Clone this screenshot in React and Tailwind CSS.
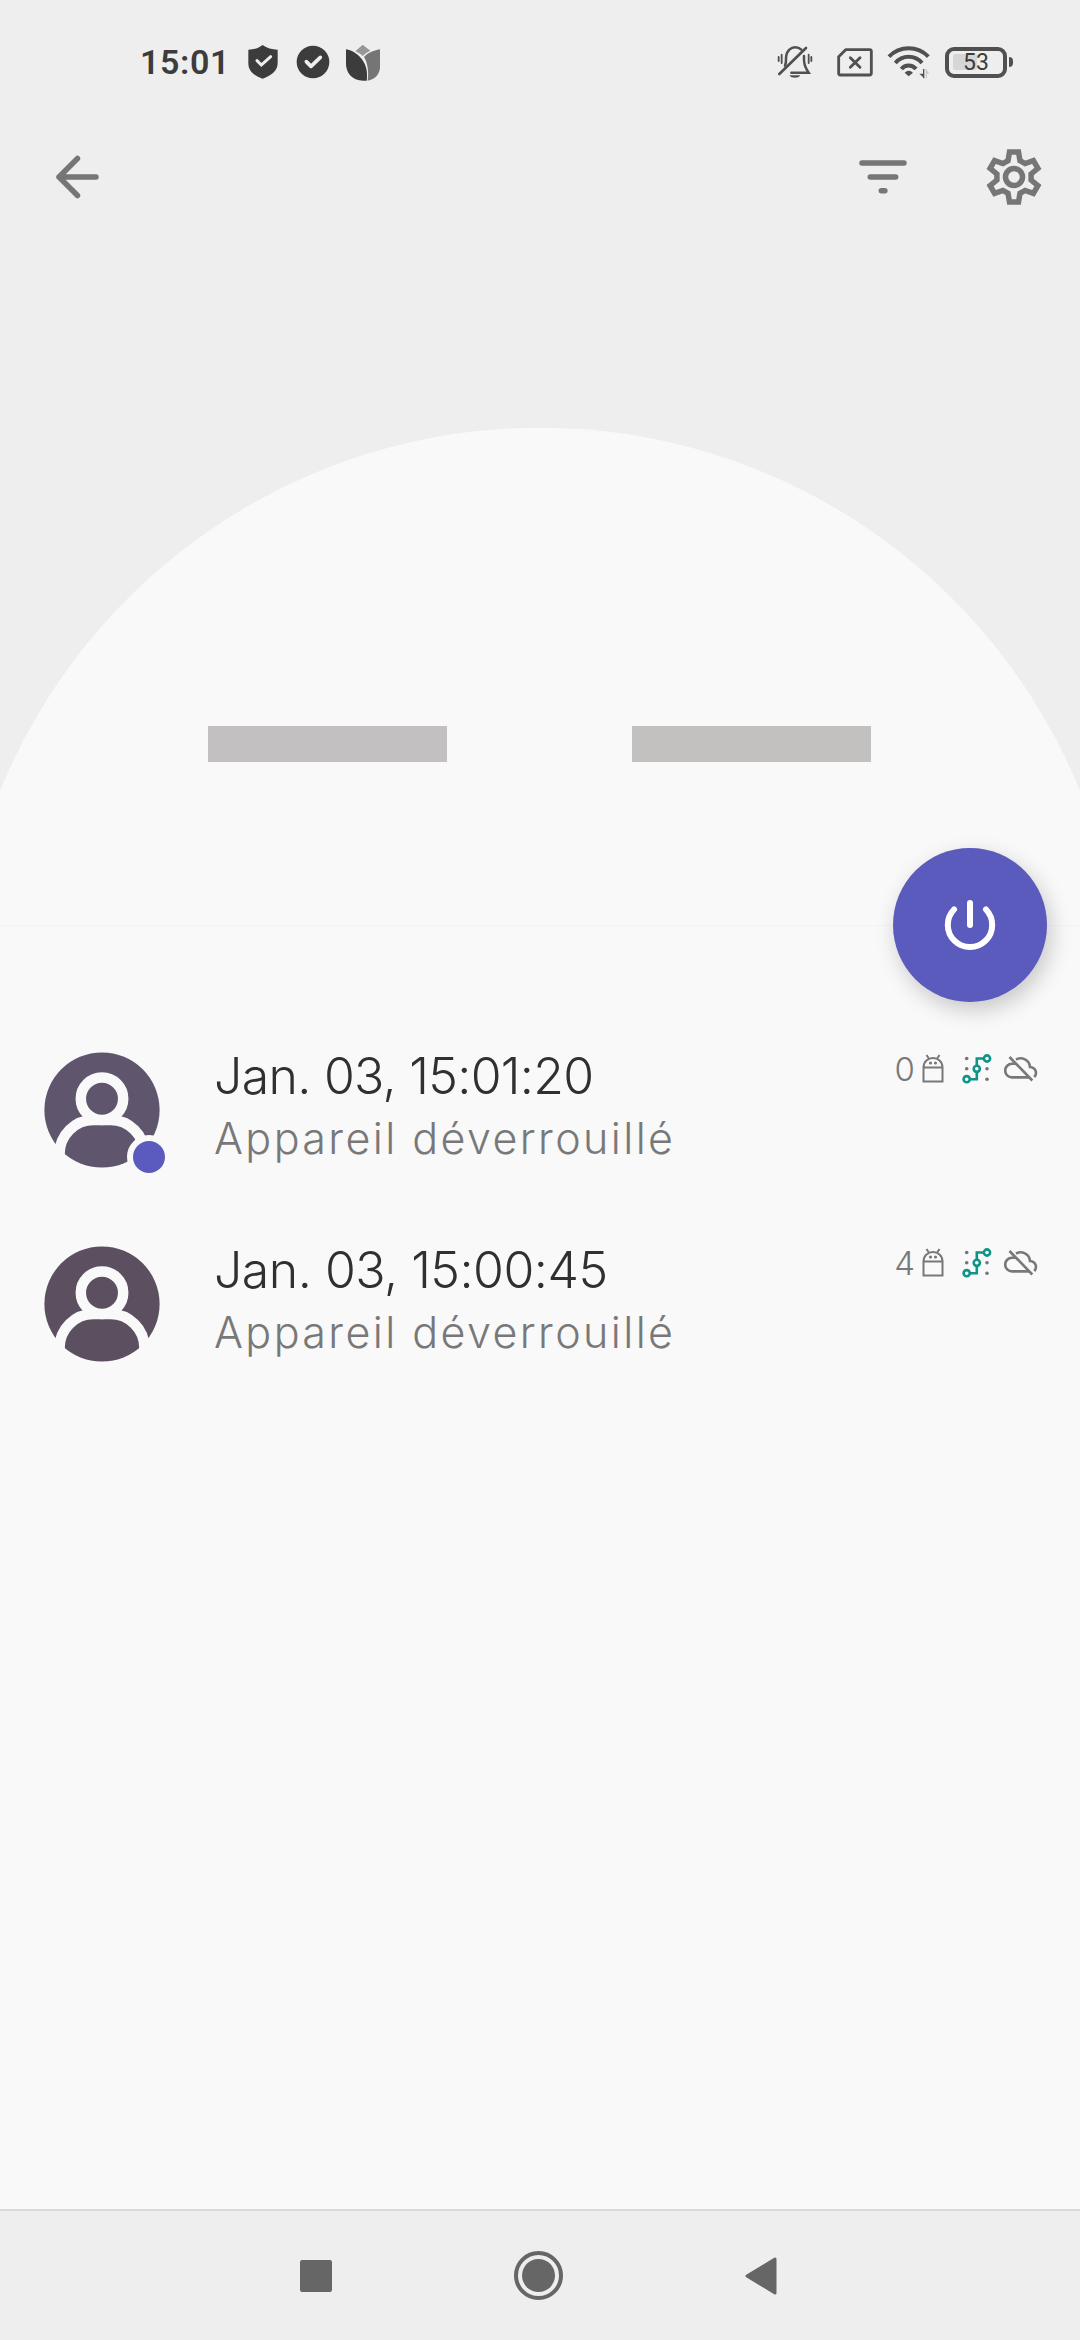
// Unlock history screen

const events = [
  { id: 1, date: 'Jan. 03, 15:01:20', label: 'Appareil déverrouillé', apps: 0, color: 'text-[#5f566e]', isNew: true, spacing: 'tracking-[-0.7px]' },
  { id: 2, date: 'Jan. 03, 15:00:45', label: 'Appareil déverrouillé', apps: 4, color: 'text-[#5b4f60]', isNew: false, spacing: 'tracking-[-0.5px]' }
];

const StatusBar = () => (
  <div className="flex h-[124px] items-center pl-[140px] pr-[67px] text-[#3c3c3c]">
    <span className="w-[106px] font-[Roboto] text-[34px] font-semibold leading-none tracking-[0.6px]">15:01</span>

    {/* Shield */}
    <svg className="h-9 w-[34px]" viewBox="0 0 102 108">
      <path fill="currentColor" d="M50 3C62 12 78 17 95 17V58C95 82 75 95 50 104C25 95 7 82 7 58V17C24 17 38 12 50 3Z" />
      <path d="M33 50L46 63L74 38" fill="none" stroke="#eee" strokeWidth="9" strokeLinecap="round" />
    </svg>

    {/* Check circle */}
    <svg className="ml-4 h-9 w-[34px]" viewBox="0 0 102 108">
      <circle cx="51" cy="54" r="49" fill="currentColor" />
      <path d="M31 53L45 67L73 40" fill="none" stroke="#eee" strokeWidth="11" strokeLinecap="round" strokeLinejoin="round" />
    </svg>

    {/* Tulip */}
    <svg className="ml-[15px] h-[37px] w-9" viewBox="0 0 108 111">
      <path fill="#969696" d="M53 2L76 20C66 25 58 30 53 36C47 30 40 26 31 22Z" />
      <path fill="#757575" d="M105 16C85 19 65 29 57 39C68 55 72 85 68 110C90 108 105 88 105 70Z" />
      <path fill="currentColor" d="M3 16C25 18 66 45 66 92C66 100 66 106 65 110H55C20 110 3 85 3 60Z" />
    </svg>

    <div className="ml-auto flex items-center text-[#505050]">
      {/* Muted bell */}
      <svg className="h-9 w-9" viewBox="0 0 108 108" fill="none" stroke="currentColor" strokeWidth="7.5" strokeLinecap="round">
        <path d="M7 90L87 12" strokeWidth="8" />
        <path d="M24 65C28 56 27 50 27 42C28 18 44 10 54 10C62 10 69 13 73 17" />
        <path d="M81 36C80 58 83 69 95 86H43" />
        <path d="M37 94H70C66 104 42 104 37 94Z" fill="currentColor" stroke="none" />
        <path d="M5 39V51M14 32V57M95 32V57M103 39V51" strokeWidth="5.5" />
      </svg>

      {/* No SIM */}
      <svg className="ml-[23px] h-[30px] w-[38px]" viewBox="0 0 114 90" fill="none" stroke="currentColor" strokeWidth="8.5">
        <path d="M29 8H101Q106 8 106 13V79Q106 84 101 84H13Q8 84 8 79V29Z" strokeLinejoin="round" />
        <path d="M43 32L72 61M72 32L43 61" strokeLinecap="round" />
      </svg>

      {/* Wi-Fi */}
      <svg className="ml-[13px] h-9 w-[43px]" viewBox="0 0 129 108" fill="none" stroke="currentColor" strokeWidth="12">
        <path d="M6 38A82 82 0 0 1 124 38M25 57A52 52 0 0 1 105 57M43 75A28 28 0 0 1 87 75" />
        <path d="M53 86Q65 74 78 86L65 97Z" fill="currentColor" stroke="none" />
        <path d="M110 75V103" strokeWidth="4" />
        <path d="M97 89H110V101Z" fill="currentColor" stroke="none" />
        <path d="M118 103V75" strokeWidth="4" stroke="#c9c9c9" />
        <path d="M127 89H118V77Z" fill="#c9c9c9" stroke="none" />
      </svg>

      <div className="relative ml-[15px] flex h-[31px] w-[62px] items-center justify-center rounded-[9px] border-4 border-[#505050]">
        <div className="absolute left-1 top-[3px] h-4 w-6 rounded-[2px] bg-[#d6d6d6]"></div>
        <span className="relative font-[Roboto] text-[23px] leading-none text-[#3c3c3c]">53</span>
      </div>
      <div className="ml-0.5 h-[10px] w-1 rounded-r bg-[#505050]"></div>
    </div>
  </div>
);

const Toolbar = () => (
  <div className="flex h-[106px] items-center justify-between pl-[50px] pr-9 text-[#767676]">
    <svg className="h-[54px] w-[54px]" viewBox="0 0 54 54" fill="none" stroke="currentColor" strokeWidth="5.5" strokeLinecap="round" strokeLinejoin="round">
      <path d="M46 27H9M27.5 8.5L9 27L27.5 45.5" />
    </svg>

    <div className="flex items-center gap-[73px]">
      <svg className="h-[54px] w-[54px]" viewBox="0 0 54 54" fill="none" stroke="currentColor" strokeWidth="5.5" strokeLinecap="round">
        <path d="M5 13H47M13.3 27H38.7M24.3 40.7H27.9" />
      </svg>
      <svg className="h-[60px] w-[60px]" viewBox="-30 -30 60 60" fill="none" stroke="currentColor" strokeWidth="5.5">
        <path d="M-6 -16.3L-4.5 -25H4.5L6 -16.3L11.1 -13.4L19.4 -16.4L23.9 -8.6L17.1 -3V3L23.9 8.6L19.4 16.4L11.1 13.4L6 16.3L4.5 25H-4.5L-6 16.3L-11.1 13.4L-19.4 16.4L-23.9 8.6L-17.1 3V-3L-23.9 -8.6L-19.4 -16.4L-11.1 -13.4Z" />
        <circle r="8.5" />
      </svg>
    </div>
  </div>
);

const PowerButton = () => (
  <button className="absolute -bottom-[77px] right-[33px] flex h-[154px] w-[154px] items-center justify-center rounded-full bg-[#5b5bbd] shadow-[4px_8px_22px_rgba(0,0,0,0.2)]">
    <svg className="h-[60px] w-[60px]" viewBox="-30 -30 60 60" fill="none" stroke="#fff" strokeWidth="6" strokeLinecap="round">
      <path d="M0 -22V0M-16 -15.5A22.2 22.2 0 1 0 16 -15.5" />
    </svg>
  </button>
);

const Avatar = ({ color, isNew }) => (
  <svg className={`h-[140px] w-[140px] shrink-0 ${color}`} viewBox="-70 -70 140 140">
    <circle r="57.6" fill="currentColor" />
    <path d="M-42.5 60V44A34 34 0 0 1 -8.5 10H8.5A34 34 0 0 1 42.5 44V60" fill="none" stroke="#f9f9f9" strokeWidth="10.5" />
    <circle cy="-11.3" r="21.2" fill="currentColor" stroke="#f9f9f9" strokeWidth="10.5" />
    {isNew && <circle cx="47" cy="47" r="19" fill="#5b5bbd" stroke="#f9f9f9" strokeWidth="6" />}
  </svg>
);

const AndroidIcon = () => (
  <svg className="h-[30px] w-6" viewBox="0 0 24 30" fill="none" stroke="currentColor" strokeWidth="2">
    <path d="M2.5 13.5H21.5V27.5H2.5ZM2.5 13.5C2.5 0.9 21.5 0.9 21.5 13.5M5.5 1L8 4.8M18.5 1L16 4.8" />
    <circle cx="9.5" cy="9" r="1.6" fill="currentColor" stroke="none" />
    <circle cx="14.5" cy="9" r="1.6" fill="currentColor" stroke="none" />
  </svg>
);

const PatternIcon = () => (
  <svg className="h-[30px] w-[30px]" viewBox="0 0 30 30" fill="none">
    <g fill="#757575">
      <circle cx="4.7" cy="4.5" r="1.8" />
      <circle cx="4.7" cy="14.8" r="1.8" />
      <circle cx="25" cy="14.8" r="1.8" />
      <circle cx="25" cy="25.2" r="1.8" />
    </g>
    <g stroke="#0f9488" strokeWidth="2.6">
      <path d="M8 25.2H14.8V18.5M14.8 11V4.5H21.5" />
      <circle cx="25" cy="4.5" r="3.1" />
      <circle cx="14.8" cy="14.8" r="3.1" />
      <circle cx="4.7" cy="25.2" r="3.1" />
    </g>
  </svg>
);

const CloudOffIcon = () => (
  <svg className="h-[30px] w-[34px]" viewBox="3 5 34 30" fill="none" stroke="currentColor" strokeWidth="2.6">
    <path d="M8.5 8L31.3 31.5" />
    <path d="M14 14.8H11A6.8 6.8 0 0 0 11 28.4H28" />
    <path d="M15 10.6C20.5 7.5 28.5 10.5 29 18C35 18.5 36.5 24.5 33.2 28" />
  </svg>
);

const EventRow = ({ event }) => (
  <li className="flex h-[194px] items-center pl-8 pr-[42px]">
    <Avatar color={event.color} isNew={event.isNew} />
    <div className="mb-2 ml-[42px] flex-1 font-[Inter] font-[340]">
      <p className={`text-[50px] leading-[64px] text-[#303030] ${event.spacing}`}>{event.date}</p>
      <p className="text-[43px] leading-[60px] tracking-[2.4px] text-[#787878]">{event.label}</p>
    </div>
    <div className="mb-[82px] flex items-center text-[#787878]">
      <span className="mr-1.5 font-[Inter] text-[33px] font-light leading-none">{event.apps}</span>
      <AndroidIcon />
      <div className="ml-[17px]"><PatternIcon /></div>
      <div className="ml-3"><CloudOffIcon /></div>
    </div>
  </li>
);

const NavigationBar = () => (
  <div className="flex h-[131px] items-center justify-between border-t-2 border-[#d9d9d9] bg-[#eee] pl-[300px] pr-[303px] text-[#666]">
    <div className="h-8 w-8 rounded-[2px] bg-[#666]"></div>
    <div className="flex h-[49px] w-[49px] items-center justify-center rounded-full border-4 border-[#666]">
      <div className="h-[33px] w-[33px] rounded-full bg-[#666]"></div>
    </div>
    <svg className="h-[38px] w-8" viewBox="0 0 32 38">
      <path d="M2 19L30 2V36Z" fill="currentColor" stroke="currentColor" strokeWidth="3" strokeLinejoin="round" />
    </svg>
  </div>
);

const App = () => {
  return (
    <div className="flex h-[2340px] w-[1080px] flex-col overflow-hidden bg-[#f9f9f9]">
      {/* Header */}
      <header className="relative h-[926px] shrink-0 border-b border-[#f4f4f4] bg-[#eee]">
        <svg className="absolute inset-0 h-full w-full" viewBox="0 0 1080 925">
          <path d="M0 791A583 583 0 0 1 1080 791V925H0Z" fill="#f9f9f9" />
        </svg>
        <div className="relative">
          <StatusBar />
          <Toolbar />
          <div className="flex gap-[185px] pl-[208px] pt-[496px]">
            <div className="h-9 w-[239px] bg-[#c2c0c0]"></div>
            <div className="h-9 w-[239px] bg-[#c2c1bf]"></div>
          </div>
        </div>
        <PowerButton />
      </header>

      {/* Events */}
      <ul className="flex-1 pt-[87px]">
        {events.map((event) => (
          <EventRow key={event.id} event={event} />
        ))}
      </ul>

      <NavigationBar />
    </div>
  );
};

export default App;
